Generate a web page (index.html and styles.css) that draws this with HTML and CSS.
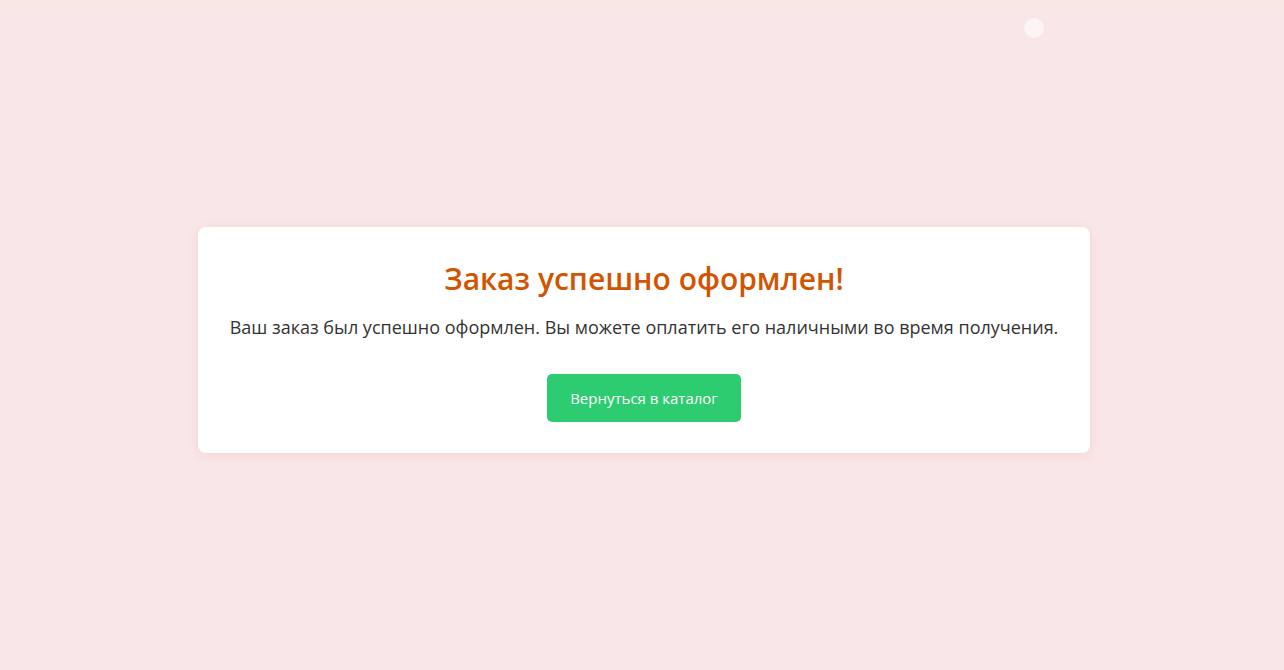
FILE: index.html
```html
<!DOCTYPE html>
<html lang="ru">
<head>
<meta charset="utf-8">
<title>Заказ оформлен</title>
<link rel="stylesheet" href="styles.css">
</head>
<body>
<div class="topline"></div>
<span class="dot"></span>
<main class="page">
  <section class="card">
    <h1 class="title">Заказ успешно оформлен!</h1>
    <p class="text">Ваш заказ был успешно оформлен. Вы можете оплатить его наличными во время получения.</p>
    <a class="btn" href="#">Вернуться в каталог</a>
  </section>
</main>
</body>
</html>
```
FILE: styles.css
```css
html, body {
  margin: 0;
  padding: 0;
  height: 100%;
}
body {
  background: #f9e6e6;
  font-family: "Open Sans", "Noto Sans", sans-serif;
  color: #333;
  position: relative;
  overflow: hidden;
}
.topline {
  height: 1px;
  background: #fbe9e3;
}
.dot {
  position: absolute;
  left: 1024px;
  top: 18px;
  width: 20px;
  height: 20px;
  border-radius: 50%;
  background: rgba(255, 255, 255, 0.6);
}
.page {
  display: flex;
  justify-content: center;
  align-items: center;
  height: 669px;
  box-sizing: border-box;
  padding-top: 8px;
  padding-left: 4px;
}
.card {
  width: 892px;
  box-sizing: border-box;
  background: #fff;
  border-radius: 8px;
  box-shadow: 0 2px 10px rgba(200, 120, 120, 0.15);
  padding: 30px 20px 31px;
  text-align: center;
}
.title {
  margin: 0;
  font-size: 30px;
  font-weight: 600;
  color: #d35400;
  line-height: 44px;
}
.text {
  margin: 13px 0 33px;
  font-size: 18px;
  line-height: 27px;
}
.btn {
  display: inline-block;
  background: #2ecc71;
  color: #fff;
  text-decoration: none;
  font-size: 15px;
  line-height: 20px;
  padding: 14px 23px;
  border-radius: 5px;
}
```
